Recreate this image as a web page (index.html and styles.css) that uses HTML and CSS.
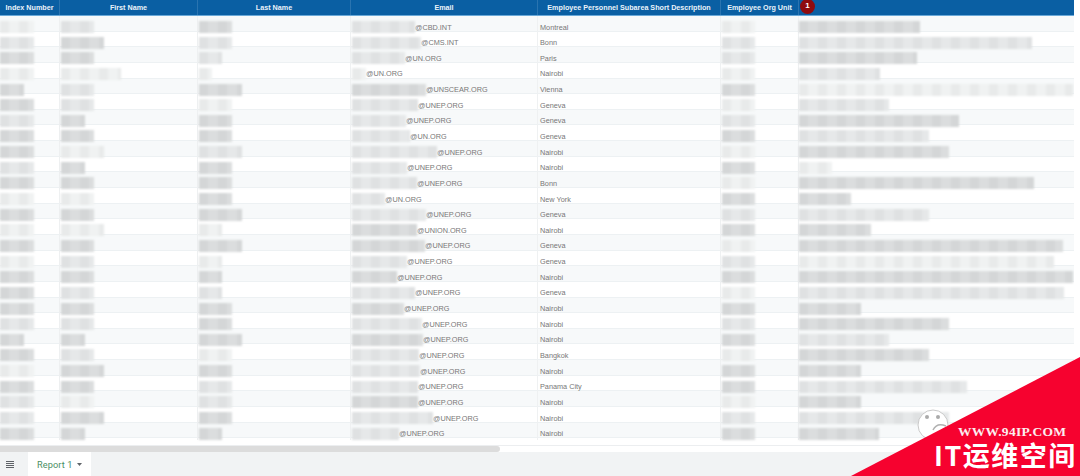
FILE: index.html
```html
<!DOCTYPE html>
<html lang="en">
<head>
<meta charset="utf-8">
<title>Report 1</title>
<link rel="stylesheet" href="styles.css">
</head>
<body>
<div class="page">
  <div class="sheet">
    <div class="table">
      <div class="head">
        <div>Index Number</div><div>First Name</div><div>Last Name</div><div>Email</div><div>Employee Personnel Subarea Short Description</div><div>Employee Org Unit</div><div></div>
      </div>
      <div class="row"><div class="cell first"><i class="b l" style="width:34px"></i></div><div class="cell"><i class="b m" style="width:33px"></i></div><div class="cell"><i class="b d" style="width:33px"></i></div><div class="cell"><i class="b m" style="width:63px"></i><span>@CBD.INT</span></div><div class="cell">Montreal</div><div class="cell"><i class="b l" style="width:33px"></i></div><div class="cell"><i class="b d" style="width:121px"></i></div></div>
      <div class="row"><div class="cell first"><i class="b m" style="width:34px"></i></div><div class="cell"><i class="b d" style="width:43px"></i></div><div class="cell"><i class="b m" style="width:33px"></i></div><div class="cell"><i class="b m" style="width:69px"></i><span>@CMS.INT</span></div><div class="cell">Bonn</div><div class="cell"><i class="b m" style="width:33px"></i></div><div class="cell"><i class="b m" style="width:233px"></i></div></div>
      <div class="row"><div class="cell first"><i class="b d" style="width:34px"></i></div><div class="cell"><i class="b d" style="width:33px"></i></div><div class="cell"><i class="b m" style="width:23px"></i></div><div class="cell"><i class="b m" style="width:53px"></i><span>@UN.ORG</span></div><div class="cell">Paris</div><div class="cell"><i class="b m" style="width:33px"></i></div><div class="cell"><i class="b d" style="width:118px"></i></div></div>
      <div class="row"><div class="cell first"><i class="b l" style="width:34px"></i></div><div class="cell"><i class="b l" style="width:60px"></i></div><div class="cell"><i class="b l" style="width:13px"></i></div><div class="cell"><i class="b l" style="width:14px"></i><span>@UN.ORG</span></div><div class="cell">Nairobi</div><div class="cell"><i class="b l" style="width:33px"></i></div><div class="cell"><i class="b m" style="width:81px"></i></div></div>
      <div class="row"><div class="cell first"><i class="b d" style="width:24px"></i></div><div class="cell"><i class="b m" style="width:33px"></i></div><div class="cell"><i class="b d" style="width:43px"></i></div><div class="cell"><i class="b d" style="width:74px"></i><span>@UNSCEAR.ORG</span></div><div class="cell">Vienna</div><div class="cell"><i class="b d" style="width:33px"></i></div><div class="cell"><i class="b l" style="width:274px"></i></div></div>
      <div class="row"><div class="cell first"><i class="b d" style="width:34px"></i></div><div class="cell"><i class="b m" style="width:33px"></i></div><div class="cell"><i class="b l" style="width:33px"></i></div><div class="cell"><i class="b m" style="width:66px"></i><span>@UNEP.ORG</span></div><div class="cell">Geneva</div><div class="cell"><i class="b l" style="width:33px"></i></div><div class="cell"><i class="b m" style="width:90px"></i></div></div>
      <div class="row"><div class="cell first"><i class="b m" style="width:34px"></i></div><div class="cell"><i class="b d" style="width:24px"></i></div><div class="cell"><i class="b d" style="width:33px"></i></div><div class="cell"><i class="b m" style="width:54px"></i><span>@UNEP.ORG</span></div><div class="cell">Geneva</div><div class="cell"><i class="b m" style="width:33px"></i></div><div class="cell"><i class="b d" style="width:160px"></i></div></div>
      <div class="row"><div class="cell first"><i class="b d" style="width:34px"></i></div><div class="cell"><i class="b d" style="width:33px"></i></div><div class="cell"><i class="b d" style="width:33px"></i></div><div class="cell"><i class="b m" style="width:58px"></i><span>@UN.ORG</span></div><div class="cell">Geneva</div><div class="cell"><i class="b d" style="width:33px"></i></div><div class="cell"><i class="b m" style="width:130px"></i></div></div>
      <div class="row"><div class="cell first"><i class="b d" style="width:34px"></i></div><div class="cell"><i class="b l" style="width:43px"></i></div><div class="cell"><i class="b m" style="width:43px"></i></div><div class="cell"><i class="b m" style="width:85px"></i><span>@UNEP.ORG</span></div><div class="cell">Nairobi</div><div class="cell"><i class="b l" style="width:33px"></i></div><div class="cell"><i class="b d" style="width:150px"></i></div></div>
      <div class="row"><div class="cell first"><i class="b m" style="width:34px"></i></div><div class="cell"><i class="b d" style="width:24px"></i></div><div class="cell"><i class="b d" style="width:33px"></i></div><div class="cell"><i class="b m" style="width:55px"></i><span>@UNEP.ORG</span></div><div class="cell">Nairobi</div><div class="cell"><i class="b d" style="width:33px"></i></div><div class="cell"><i class="b l" style="width:33px"></i></div></div>
      <div class="row"><div class="cell first"><i class="b d" style="width:34px"></i></div><div class="cell"><i class="b d" style="width:33px"></i></div><div class="cell"><i class="b d" style="width:33px"></i></div><div class="cell"><i class="b m" style="width:65px"></i><span>@UNEP.ORG</span></div><div class="cell">Bonn</div><div class="cell"><i class="b l" style="width:33px"></i></div><div class="cell"><i class="b d" style="width:235px"></i></div></div>
      <div class="row"><div class="cell first"><i class="b l" style="width:34px"></i></div><div class="cell"><i class="b l" style="width:33px"></i></div><div class="cell"><i class="b d" style="width:33px"></i></div><div class="cell"><i class="b m" style="width:33px"></i><span>@UN.ORG</span></div><div class="cell">New York</div><div class="cell"><i class="b d" style="width:33px"></i></div><div class="cell"><i class="b d" style="width:52px"></i></div></div>
      <div class="row"><div class="cell first"><i class="b d" style="width:34px"></i></div><div class="cell"><i class="b d" style="width:33px"></i></div><div class="cell"><i class="b d" style="width:43px"></i></div><div class="cell"><i class="b m" style="width:74px"></i><span>@UNEP.ORG</span></div><div class="cell">Geneva</div><div class="cell"><i class="b m" style="width:33px"></i></div><div class="cell"><i class="b m" style="width:130px"></i></div></div>
      <div class="row"><div class="cell first"><i class="b l" style="width:34px"></i></div><div class="cell"><i class="b l" style="width:43px"></i></div><div class="cell"><i class="b l" style="width:23px"></i></div><div class="cell"><i class="b d" style="width:65px"></i><span>@UNION.ORG</span></div><div class="cell">Nairobi</div><div class="cell"><i class="b d" style="width:33px"></i></div><div class="cell"><i class="b d" style="width:72px"></i></div></div>
      <div class="row"><div class="cell first"><i class="b d" style="width:34px"></i></div><div class="cell"><i class="b d" style="width:33px"></i></div><div class="cell"><i class="b d" style="width:43px"></i></div><div class="cell"><i class="b d" style="width:73px"></i><span>@UNEP.ORG</span></div><div class="cell">Geneva</div><div class="cell"><i class="b l" style="width:33px"></i></div><div class="cell"><i class="b d" style="width:264px"></i></div></div>
      <div class="row"><div class="cell first"><i class="b l" style="width:34px"></i></div><div class="cell"><i class="b m" style="width:33px"></i></div><div class="cell"><i class="b l" style="width:23px"></i></div><div class="cell"><i class="b m" style="width:55px"></i><span>@UNEP.ORG</span></div><div class="cell">Geneva</div><div class="cell"><i class="b m" style="width:33px"></i></div><div class="cell"><i class="b l" style="width:255px"></i></div></div>
      <div class="row"><div class="cell first"><i class="b d" style="width:34px"></i></div><div class="cell"><i class="b d" style="width:33px"></i></div><div class="cell"><i class="b d" style="width:23px"></i></div><div class="cell"><i class="b d" style="width:45px"></i><span>@UNEP.ORG</span></div><div class="cell">Nairobi</div><div class="cell"><i class="b d" style="width:33px"></i></div><div class="cell"><i class="b d" style="width:274px"></i></div></div>
      <div class="row"><div class="cell first"><i class="b d" style="width:34px"></i></div><div class="cell"><i class="b m" style="width:33px"></i></div><div class="cell"><i class="b m" style="width:23px"></i></div><div class="cell"><i class="b m" style="width:63px"></i><span>@UNEP.ORG</span></div><div class="cell">Geneva</div><div class="cell"><i class="b l" style="width:33px"></i></div><div class="cell"><i class="b m" style="width:265px"></i></div></div>
      <div class="row"><div class="cell first"><i class="b d" style="width:34px"></i></div><div class="cell"><i class="b d" style="width:33px"></i></div><div class="cell"><i class="b d" style="width:33px"></i></div><div class="cell"><i class="b d" style="width:52px"></i><span>@UNEP.ORG</span></div><div class="cell">Nairobi</div><div class="cell"><i class="b d" style="width:33px"></i></div><div class="cell"><i class="b d" style="width:62px"></i></div></div>
      <div class="row"><div class="cell first"><i class="b m" style="width:34px"></i></div><div class="cell"><i class="b m" style="width:33px"></i></div><div class="cell"><i class="b d" style="width:33px"></i></div><div class="cell"><i class="b m" style="width:70px"></i><span>@UNEP.ORG</span></div><div class="cell">Nairobi</div><div class="cell"><i class="b m" style="width:33px"></i></div><div class="cell"><i class="b d" style="width:150px"></i></div></div>
      <div class="row"><div class="cell first"><i class="b d" style="width:24px"></i></div><div class="cell"><i class="b d" style="width:24px"></i></div><div class="cell"><i class="b d" style="width:43px"></i></div><div class="cell"><i class="b d" style="width:71px"></i><span>@UNEP.ORG</span></div><div class="cell">Nairobi</div><div class="cell"><i class="b d" style="width:33px"></i></div><div class="cell"><i class="b m" style="width:90px"></i></div></div>
      <div class="row"><div class="cell first"><i class="b d" style="width:34px"></i></div><div class="cell"><i class="b m" style="width:33px"></i></div><div class="cell"><i class="b l" style="width:33px"></i></div><div class="cell"><i class="b m" style="width:67px"></i><span>@UNEP.ORG</span></div><div class="cell">Bangkok</div><div class="cell"><i class="b l" style="width:33px"></i></div><div class="cell"><i class="b d" style="width:130px"></i></div></div>
      <div class="row"><div class="cell first"><i class="b l" style="width:34px"></i></div><div class="cell"><i class="b d" style="width:43px"></i></div><div class="cell"><i class="b d" style="width:33px"></i></div><div class="cell"><i class="b m" style="width:68px"></i><span>@UNEP.ORG</span></div><div class="cell">Nairobi</div><div class="cell"><i class="b d" style="width:33px"></i></div><div class="cell"><i class="b d" style="width:62px"></i></div></div>
      <div class="row"><div class="cell first"><i class="b d" style="width:34px"></i></div><div class="cell"><i class="b d" style="width:33px"></i></div><div class="cell"><i class="b m" style="width:33px"></i></div><div class="cell"><i class="b m" style="width:66px"></i><span>@UNEP.ORG</span></div><div class="cell">Panama City</div><div class="cell"><i class="b d" style="width:33px"></i></div><div class="cell"><i class="b m" style="width:168px"></i></div></div>
      <div class="row"><div class="cell first"><i class="b m" style="width:34px"></i></div><div class="cell"><i class="b l" style="width:33px"></i></div><div class="cell"><i class="b m" style="width:33px"></i></div><div class="cell"><i class="b d" style="width:66px"></i><span>@UNEP.ORG</span></div><div class="cell">Nairobi</div><div class="cell"><i class="b l" style="width:33px"></i></div><div class="cell"><i class="b d" style="width:62px"></i></div></div>
      <div class="row"><div class="cell first"><i class="b m" style="width:34px"></i></div><div class="cell"><i class="b d" style="width:43px"></i></div><div class="cell"><i class="b d" style="width:33px"></i></div><div class="cell"><i class="b m" style="width:81px"></i><span>@UNEP.ORG</span></div><div class="cell">Nairobi</div><div class="cell"><i class="b m" style="width:33px"></i></div><div class="cell"><i class="b m" style="width:150px"></i></div></div>
      <div class="row"><div class="cell first"><i class="b d" style="width:34px"></i></div><div class="cell"><i class="b d" style="width:24px"></i></div><div class="cell"><i class="b d" style="width:23px"></i></div><div class="cell"><i class="b m" style="width:47px"></i><span>@UNEP.ORG</span></div><div class="cell">Nairobi</div><div class="cell"><i class="b d" style="width:33px"></i></div><div class="cell"><i class="b d" style="width:80px"></i></div></div>
    </div>
    <div class="scroll"><div class="thumb"></div></div>
  </div>
  <div class="tabs">
    <div class="menu">
      <svg width="8" height="7" viewBox="0 0 8 7"><path d="M0 0h8v1H0zM0 2h8v1H0zM0 4h8v1H0zM0 6h8v1H0z" fill="#5f6368"/></svg>
    </div>
    <div class="tab">Report 1<svg width="5" height="3" viewBox="0 0 5 3"><path d="M0 0h5L2.500 3z" fill="#5f6368"/></svg></div>
  </div>
  <div class="badge">1</div>
  <svg class="face" width="34" height="34" viewBox="0 0 34 34">
    <circle cx="17" cy="17" r="15" fill="#fff" stroke="#c9c9c9"/>
    <circle cx="11" cy="9" r="2" fill="#aaa"/>
    <circle cx="22" cy="9" r="2" fill="#aaa"/>
    <path d="M17 22q4-8 13-4" fill="none" stroke="#b0b0b0" stroke-width="1.500"/>
  </svg>
  <div class="ribbon">
    <div class="url">WWW.94IP.COM</div>
    <div class="brand">IT运维空间</div>
  </div>
</div>
</body>
</html>
```

FILE: styles.css
```css
* { box-sizing: border-box; }
html, body { margin: 0; padding: 0; }
body { font-family: "Liberation Sans", Arial, sans-serif; background: #fff; }
.page { position: relative; width: 1080px; height: 476px; overflow: hidden; display: flex; flex-direction: column; }
.sheet { flex: 1; display: flex; flex-direction: column; min-height: 0; }
.table { width: 1074px; flex: 0 0 446px; overflow: hidden; border-bottom: 1px solid #eceef0; }
.head, .row { display: grid; grid-template-columns: 60px 138px 153px 187px 183px 78px 275px; }
.head { height: 16px; background: #0a5fa3; border-bottom: 1px solid #6aa9d8; color: #eaf3fa; font-size: 7.2px; font-weight: 700; line-height: 15px; text-align: center; }
.head > div { border-right: 1px solid #2a74b0; white-space: nowrap; }
.head > div:last-child { border-right: 0; }
.row { height: 15.65px; border-bottom: 1px solid #edf1f3; color: #777; font-size: 7.3px; }
.row:nth-child(even) { background: #f7f9fa; }
.cell { display: flex; align-items: center; padding: 5px 0 0 2px; border-right: 1px solid #eff1f2; white-space: nowrap; }
.cell:last-child { border-right: 0; padding-left: 1px; }
.cell > .b { margin-left: -1px; }
.first { padding-left: 1px; }
.b { display: block; flex: none; height: 12px; filter: blur(1.2px); background-image: repeating-linear-gradient(90deg, rgba(0,0,0,.03) 0 9px, transparent 9px 19px); }
.d { background-color: #dbddde; }
.m { background-color: #e6e8e9; }
.l { background-color: #f0f2f2; }
.scroll { height: 6px; background: #fff; }
.thumb { width: 500px; height: 6px; background: #dcdcdc; border-radius: 0 3px 3px 0; }
.tabs { flex: 0 0 24px; display: flex; background: #f1f3f4; }
.menu { width: 28px; display: flex; align-items: center; justify-content: center; padding-right: 9px; }
.tab { width: 63px; background: #fff; display: flex; align-items: center; gap: 4px; padding-left: 9px; color: #4b8f63; font-family: Roboto, sans-serif; font-size: 9.2px; letter-spacing: .1px; }
.badge { position: absolute; left: 800px; top: -1px; width: 15px; height: 15px; border-radius: 50%; background: #8e0b0f; color: #fff; font-size: 8px; font-weight: 700; line-height: 14px; text-align: center; }
.face { position: absolute; left: 916px; top: 408px; }
.ribbon { position: absolute; left: 851px; top: 357px; width: 229px; height: 119px; background: #f6022f; clip-path: polygon(100% 0, 100% 100%, 0 100%); }
.url { position: absolute; left: 107px; top: 68px; color: #fbeef0; font-family: "Liberation Serif", serif; font-size: 13.5px; font-weight: 700; line-height: 14px; letter-spacing: .3px; white-space: nowrap; }
.brand { position: absolute; left: 83px; top: 84px; color: #fff; font-family: "Noto Sans CJK SC", sans-serif; font-size: 27px; font-weight: 700; line-height: 28px; letter-spacing: 1.500px; white-space: nowrap; }
```
